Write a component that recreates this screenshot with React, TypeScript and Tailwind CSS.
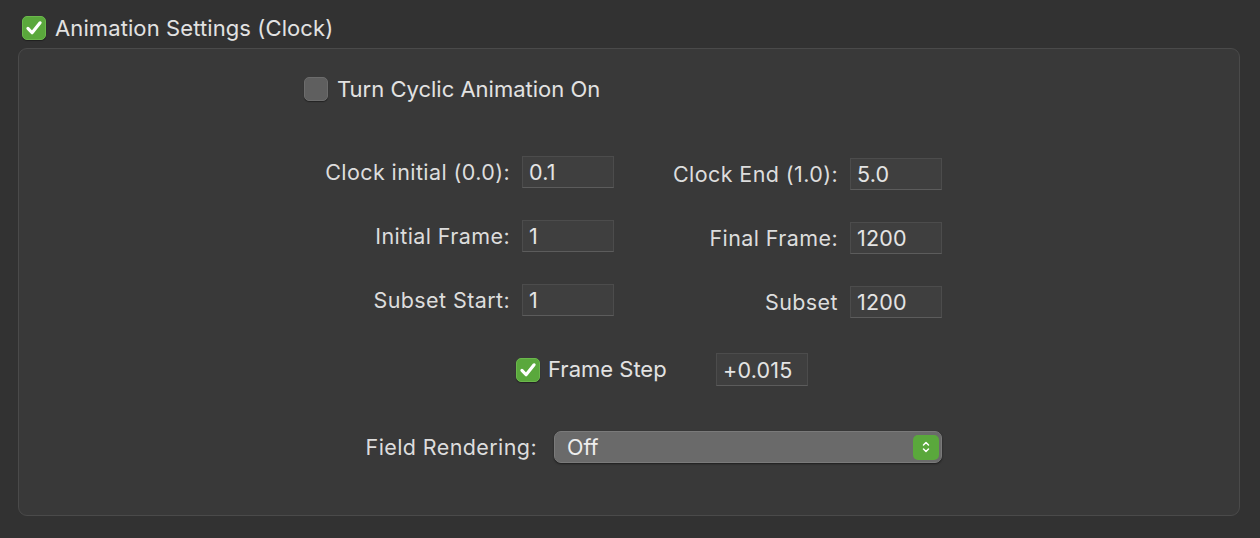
import { useState } from "react";

const font = { fontFamily: "Inter, 'Noto Sans', sans-serif" };

const Check = ({ checked, onClick }: { checked: boolean; onClick?: () => void }) =>
  checked ? (
    <button
      onClick={onClick}
      className="w-[24px] h-[24px] rounded-[5px] bg-[#5aa83c] border border-[#6bb84c] flex items-center justify-center shadow-[0_1px_1px_rgba(0,0,0,0.4)]"
    >
      <svg width="18" height="18" viewBox="0 0 16 16" fill="none">
        <path d="M2.6 8.4 L6.3 12.2 L13.4 3.4" stroke="white" strokeWidth="2.8" strokeLinecap="round" strokeLinejoin="round" />
      </svg>
    </button>
  ) : (
    <button
      onClick={onClick}
      className="w-[24px] h-[24px] rounded-[5px] bg-[#5f5f5f] border border-[#6c6c6c] shadow-[0_1px_1px_rgba(0,0,0,0.4)]"
    />
  );

const Field = ({ value }: { value: string }) => (
  <input
    defaultValue={value}
    className="w-[92px] h-[32px] bg-[#3f3f3f] border border-[#4c4c4c] border-b-[#5c5c5c] px-[6px] text-[21.5px] tracking-[0.2px] text-[#e4e4e4] outline-none"
  />
);

const Label = ({ text, w }: { text: string; w: string }) => (
  <span className={`${w} text-right text-[21.5px] tracking-[0.4px] text-[#dddddd] pr-[12px] whitespace-nowrap`}>{text}</span>
);

export default function App() {
  const [anim, setAnim] = useState(true);
  const [cyclic, setCyclic] = useState(false);
  const [step, setStep] = useState(true);

  const rows = [
    ["Clock initial (0.0):", "0.1", "Clock End (1.0):", "5.0"],
    ["Initial Frame:", "1", "Final Frame:", "1200"],
    ["Subset Start:", "1", "Subset", "1200"],
  ];

  return (
    <div style={font} className="w-[1260px] h-[538px] bg-[#323232] overflow-hidden">
      <div className="flex items-center gap-[9px] pl-[22px] pt-[16px] h-[40px]">
        <Check checked={anim} onClick={() => setAnim(!anim)} />
        <span className="text-[22px] tracking-[0.1px] text-[#e2e2e2] leading-none">Animation Settings (Clock)</span>
      </div>
      <div className="ml-[18px] mt-[8px] w-[1222px] h-[468px] rounded-[9px] bg-[#393939] border border-[#4a4a4a]">
        <div className="flex items-center gap-[9px] ml-[285px] mt-[28px] h-[24px]">
          <Check checked={cyclic} onClick={() => setCyclic(!cyclic)} />
          <span className="text-[22px] text-[#e2e2e2]">Turn Cyclic Animation On</span>
        </div>

        <div className="flex flex-col gap-[32px] mt-[55px]">
          {rows.map(([l1, v1, l2, v2]) => (
            <div key={l1} className="flex items-center ml-[291px] h-[32px]">
              <Label text={l1} w="w-[212px]" />
              <Field value={v1} />
              <div className="flex items-center translate-y-[2px]">
                <Label text={l2} w="w-[236px]" />
                <Field value={v2} />
              </div>
            </div>
          ))}
        </div>

        <div className="flex items-center ml-[497px] mt-[37px] h-[33px]">
          <Check checked={step} onClick={() => setStep(!step)} />
          <span className="ml-[8px] w-[168px] text-[22px] text-[#e2e2e2]">Frame Step</span>
          <input
            defaultValue="+0.015"
            className="w-[92px] h-[33px] bg-[#3f3f3f] border border-[#4c4c4c] border-b-[#5c5c5c] px-[6px] text-[21.5px] tracking-[0.2px] text-[#e4e4e4] outline-none"
          />
        </div>

        <div className="flex items-center ml-[330px] mt-[45px] h-[32px]">
          <span className="w-[205px] text-right text-[21.5px] tracking-[0.4px] text-[#dddddd] pr-[17px] whitespace-nowrap">Field Rendering:</span>
          <div className="w-[388px] h-[32px] rounded-[7px] bg-[#6a6a6a] border border-[#7a7a7a] shadow-[0_1px_2px_rgba(0,0,0,0.5)] flex items-center justify-between pl-[12px] pr-[2px]">
            <span className="text-[21.5px] text-[#eeeeee]">Off</span>
            <div className="w-[26px] h-[25px] rounded-[5px] bg-[#5aa83c] flex items-center justify-center">
              <svg width="10" height="16" viewBox="0 0 10 16" fill="none">
                <path d="M2.5 6 L5 3.5 L7.5 6" stroke="white" strokeWidth="1.5" strokeLinecap="round" strokeLinejoin="round" />
                <path d="M2.5 10 L5 12.5 L7.5 10" stroke="white" strokeWidth="1.5" strokeLinecap="round" strokeLinejoin="round" />
              </svg>
            </div>
          </div>
        </div>
      </div>
    </div>
  );
}
